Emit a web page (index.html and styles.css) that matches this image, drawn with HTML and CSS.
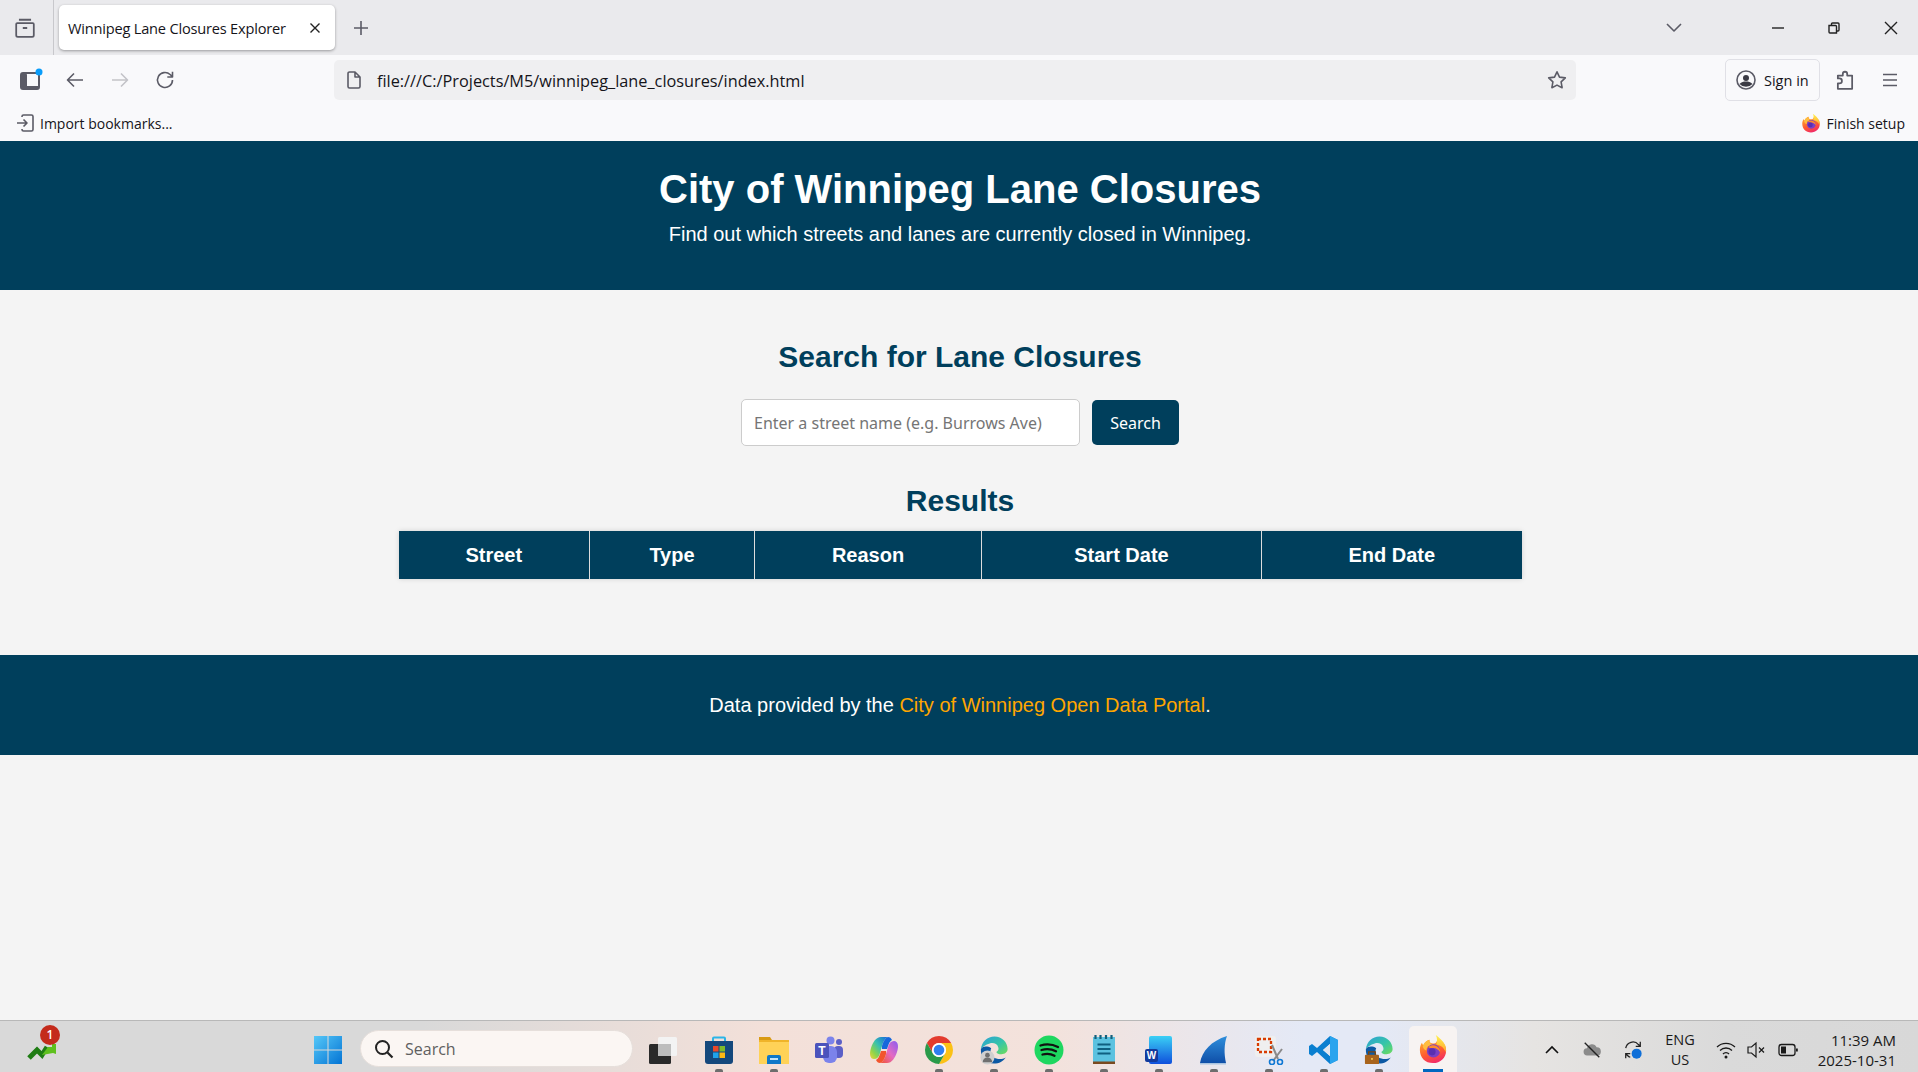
FILE: index.html
```html
<!DOCTYPE html>
<html lang="en">
<head>
<meta charset="utf-8">
<title>Winnipeg Lane Closures Explorer</title>
<link rel="stylesheet" href="styles.css">
</head>
<body>
<svg class="defs" width="0" height="0" aria-hidden="true">
  <defs>
    <linearGradient id="fxBody" x1="0.2" y1="0" x2="0.6" y2="1"><stop offset="0" stop-color="#ffb02e"/><stop offset=".6" stop-color="#ff5a30"/><stop offset="1" stop-color="#f02a6a"/></linearGradient>
    <linearGradient id="fxFlame" x1="0" y1="0" x2="0" y2="1"><stop offset="0" stop-color="#fff44f"/><stop offset="1" stop-color="#ffa52e"/></linearGradient>
    <linearGradient id="edgeG" x1="0" y1="0" x2="1" y2="1"><stop offset="0" stop-color="#2d9fd8"/><stop offset=".55" stop-color="#36c5a8"/><stop offset="1" stop-color="#6fdc5a"/></linearGradient>
    <linearGradient id="startG" x1="0" y1="0" x2="1" y2="1"><stop offset="0" stop-color="#55c8f8"/><stop offset="1" stop-color="#0474d4"/></linearGradient>
    <linearGradient id="copL" x1="1" y1="0" x2="0" y2="1"><stop offset="0" stop-color="#1668dc"/><stop offset=".45" stop-color="#38c0b0"/><stop offset=".75" stop-color="#8fd44a"/><stop offset="1" stop-color="#f2d43a"/></linearGradient>
    <linearGradient id="copR" x1="1" y1="0" x2="0" y2="1"><stop offset="0" stop-color="#8a5cf0"/><stop offset=".5" stop-color="#e46ac4"/><stop offset="1" stop-color="#f2552e"/></linearGradient>
    <linearGradient id="wordG" x1="0" y1="0" x2="0" y2="1"><stop offset="0" stop-color="#3bd0f5"/><stop offset="1" stop-color="#0f4fdc"/></linearGradient>
    <linearGradient id="sharkG" x1="0" y1="0" x2="0" y2="1"><stop offset="0" stop-color="#2f8fdc"/><stop offset="1" stop-color="#0f4fa8"/></linearGradient>
    <symbol id="firefox" viewBox="0 0 32 32">
      <path d="M16 31C7.700 31 2 25 2 17c0-3 .8-5.600 2.200-7.600.3 1.200.8 2 1.600 2.600C7 8.500 9.700 6.300 12.500 6 11.800 8 12.600 9.300 14.500 9.800 19 11 20 9 21 5c5.500 2.800 9 7.400 9 12.500C30 25.400 24 31 16 31z" fill="url(#fxBody)"/>
      <path d="M19 1c4 3 8 6.500 10 11 1 2.300 1 5 .6 7.500C27.500 14 23 11.500 19.500 11.500 20.500 8 20.800 4.500 19 1z" fill="url(#fxFlame)"/>
      <path d="M5 13c1-3 3.500-5.500 7-6.500-.4 2.500 1 4 3.500 4.600-3.500.6-6.500 2.400-6.500 6.400C7 17 5.500 15.500 5 13z" fill="#ffbd3f"/>
      <circle cx="16.500" cy="18" r="7" fill="#7a3fc4"/>
      <path d="M11 14c2.500-2 6-2.500 9-1 2.500 1.300 4 4 3.600 6.500-1.500-2.800-4.500-4.500-7-4.500-2 0-4 .1-5.600-1z" fill="#ff8a2e"/>
      <circle cx="15" cy="19" r="3.800" fill="#5a2fb0"/>
    </symbol>
    <symbol id="edge" viewBox="0 0 32 32">
      <path d="M2 15C3 7 9 1.500 16.500 1.500 24.500 1.500 30.500 7.500 30.500 15c0 3.500-3 5.500-6.500 5.500-3 0-5-1-5.500-2.500 2-1 2.800-2.700 2-5C19.500 9 15 8 11.500 9 7 10.300 3.500 12.500 2 15z" fill="url(#edgeG)"/>
      <path d="M2 15c-.5 9 5.500 15.500 14 15.500 5.500 0 10-2.500 12.500-6.500-3 1.800-7 2.200-10 1C13 23.500 11 18.500 13 14 8.500 11.500 4 12 2 15z" fill="#0c59a4"/>
    </symbol>
  </defs>
</svg>

<div class="browser">
  <div class="tabstrip">
    <div class="strip-btn sep">
      <svg class="i22" viewBox="0 0 20 20"><path class="s" d="M4.500 2.500h11M3 5.500h14a1 1 0 0 1 1 1v10a1.500 1.500 0 0 1-1.500 1.500h-13A1.500 1.500 0 0 1 2 16.500v-10a1 1 0 0 1 1-1zM8 10h4"/></svg>
    </div>
    <div class="tab">
      <span class="tab-title">Winnipeg Lane Closures Explorer</span>
      <svg class="i12" viewBox="0 0 12 12"><path class="s-dark" d="M1.500 1.500l9 9M10.500 1.500l-9 9"/></svg>
    </div>
    <div class="newtab"><svg class="i16" viewBox="0 0 16 16"><path class="s" d="M8 1v14M1 8h14"/></svg></div>
    <div class="strip-right">
      <svg class="i16 chev" viewBox="0 0 16 16"><path class="s" d="M1 4l7 7 7-7"/></svg>
      <div class="wctl"><svg class="i12" viewBox="0 0 12 12"><path class="s-dark" d="M0 6h12"/></svg></div>
      <div class="wctl"><svg class="i12" viewBox="0 0 12 12"><path class="s-dark" d="M1 3.500h6.500a1 1 0 0 1 1 1V11h-6.500a1 1 0 0 1-1-1zM3.500 3.500V2a1 1 0 0 1 1-1h5.500a1 1 0 0 1 1 1v6a1 1 0 0 1-1 1H8.500"/></svg></div>
      <div class="wctl"><svg class="i14" viewBox="0 0 14 14"><path class="s-dark" d="M1 1l12 12M13 1L1 13"/></svg></div>
    </div>
  </div>

  <div class="toolbar">
    <div class="tb-btn first">
      <svg class="i26" viewBox="0 0 26 26"><rect x="3" y="6" width="18" height="16" rx="2" fill="#f9f9fb" stroke="#5b5b66" stroke-width="2"/><rect x="3" y="6" width="6" height="16" rx="2" fill="#5b5b66"/><rect x="3" y="19" width="18" height="3" fill="#5b5b66"/><circle cx="21" cy="5" r="3.500" fill="#0a9dfa"/></svg>
    </div>
    <div class="tb-btn"><svg class="i20" viewBox="0 0 20 20"><path class="s" d="M18 10H2.500M9 3.500L2.500 10 9 16.500"/></svg></div>
    <div class="tb-btn"><svg class="i20" viewBox="0 0 20 20"><path class="s off" d="M2 10h15.500M11 3.500l6.500 6.500-6.500 6.500"/></svg></div>
    <div class="tb-btn"><svg class="i20" viewBox="0 0 20 20"><path class="s" d="M17.500 10a7.500 7.500 0 1 1-2.400-5.500l2.400 2.200M17.500 1.800v5.200h-5.200"/></svg></div>
    <div class="urlbar">
      <svg class="i20 url-file" viewBox="0 0 20 20"><path class="s" d="M4 3.500A1.500 1.500 0 0 1 5.500 2H11l5 5v9.500a1.500 1.500 0 0 1-1.500 1.500h-9A1.500 1.500 0 0 1 4 16.500zM11 2v5h5"/></svg>
      <span class="url-text">file:///C:/Projects/M5/winnipeg_lane_closures/index.html</span>
      <svg class="i20 url-star" viewBox="0 0 20 20"><path class="s" d="M10 1.800l2.500 5.300 5.800.8-4.200 4 1 5.800L10 15.100l-5.100 2.600 1-5.800-4.200-4 5.800-.8z"/></svg>
    </div>
    <div class="signin">
      <svg class="i20" viewBox="0 0 20 20"><circle class="s" cx="10" cy="10" r="9"/><circle cx="10" cy="8" r="3" fill="#3a3a44"/><path d="M3.500 14c2-2 4-2.500 6.500-2.500s4.500.5 6.500 2.500a9 9 0 0 1-13 0z" fill="#3a3a44"/></svg>
      <span>Sign in</span>
    </div>
    <div class="tb-btn puzzle"><svg class="i22" viewBox="0 0 20 20"><path class="s" d="M10 2.500a2 2 0 0 1 2 2V6h4.500v12H3.500v-5H5a2.200 2.200 0 0 0 0-4.400H3.500V6H8V4.500a2 2 0 0 1 2-2z"/></svg></div>
    <div class="tb-btn menu"><svg class="i16" viewBox="0 0 16 16"><path class="s" d="M1 2.500h14M1 8h14M1 13.500h14"/></svg></div>
  </div>

  <div class="bookmarks">
    <svg class="i18" viewBox="0 0 18 18"><path class="s" d="M1 9h10M7.500 5.500L11 9l-3.500 3.500M6 3V2.500A1.500 1.500 0 0 1 7.500 1h8A1.500 1.500 0 0 1 17 2.500v13a1.500 1.500 0 0 1-1.500 1.500h-8A1.500 1.500 0 0 1 6 15.500V15"/></svg>
    <span>Import bookmarks...</span>
    <span class="bm-right">
      <svg class="i20" viewBox="0 0 32 32"><use href="#firefox"/></svg>
      <span>Finish setup</span>
    </span>
  </div>
</div>

<div class="page">
  <header class="site-header">
    <h1>City of Winnipeg Lane Closures</h1>
    <p>Find out which streets and lanes are currently closed in Winnipeg.</p>
  </header>
  <main class="site-main">
    <h2>Search for Lane Closures</h2>
    <div class="search-row">
      <input class="search-input" type="text" placeholder="Enter a street name (e.g. Burrows Ave)">
      <button class="search-btn" type="button">Search</button>
    </div>
    <h2 class="results-title">Results</h2>
    <table class="results">
      <colgroup><col class="c1"><col class="c2"><col class="c3"><col class="c4"><col class="c5"></colgroup>
      <thead><tr><th>Street</th><th>Type</th><th>Reason</th><th>Start Date</th><th>End Date</th></tr></thead>
    </table>
  </main>
  <footer class="site-footer">
    <p>Data provided by the <a href="#">City of Winnipeg Open Data Portal</a>.</p>
  </footer>
</div>

<div class="taskbar">
  <div class="widget">
    <svg class="i34" viewBox="0 0 34 30"><path d="M3 24l8-8 5 5 5-8" fill="none" stroke="#1f7d14" stroke-width="5"/><path d="M16 21l6-8 4 0 0-3 4 0 0 10-3-1z" fill="#5fc01e"/></svg>
    <span class="badge">1</span>
  </div>
  <div class="tk start">
    <svg class="i30" viewBox="0 0 30 30"><path fill="url(#startG)" d="M1 1h13.500v13.500H1zM15.500 1H29v13.500H15.500zM1 15.500h13.500V29H1zM15.500 15.500H29V29H15.500z"/></svg>
  </div>
  <div class="tk-search">
    <svg class="i20" viewBox="0 0 20 20"><circle cx="8.500" cy="8.500" r="6.500" fill="none" stroke="#222" stroke-width="2"/><path d="M13.500 13.500l5 5" stroke="#222" stroke-width="2.200"/></svg>
    <span>Search</span>
  </div>
  <div class="tk lead">
    <svg class="i30" viewBox="0 0 30 30"><rect x="10" y="2" width="19" height="19" rx="1.500" fill="#f3f3f3"/><rect x="1" y="9" width="22" height="20" rx="1.500" fill="#2a2a2a"/><rect x="10" y="9" width="13" height="12" fill="#bdbdbd"/></svg>
  </div>
  <div class="tk dot shift">
    <svg class="i30" viewBox="0 0 30 30"><path d="M9 6V3.500a1 1 0 0 1 1-1h10a1 1 0 0 1 1 1V6" fill="none" stroke="#2bb5e8" stroke-width="2"/><path d="M1 6h28v20a3 3 0 0 1-3 3H4a3 3 0 0 1-3-3z" fill="#14487c"/><rect x="9" y="11" width="5.500" height="5.500" fill="#e8492a"/><rect x="15.500" y="11" width="5.500" height="5.500" fill="#7fba2a"/><rect x="9" y="17.500" width="5.500" height="5.500" fill="#1fa2ea"/><rect x="15.500" y="17.500" width="5.500" height="5.500" fill="#fdb813"/></svg>
  </div>
  <div class="tk dot">
    <svg class="i30" viewBox="0 0 30 30"><path d="M0 2h11l2 3h-13z" fill="#d99a13"/><rect y="5" width="30" height="24" fill="#ffd257"/><rect y="5" width="30" height="2" fill="#f0b429"/><path d="M8 29v-7a2 2 0 0 1 2-2h10a2 2 0 0 1 2 2v7z" fill="#0f78c8"/><rect x="11" y="23" width="8" height="2" fill="#bfe3fb"/></svg>
  </div>
  <div class="tk">
    <svg class="i30" viewBox="0 0 30 30"><circle cx="25" cy="7" r="3" fill="#5b5fc7"/><circle cx="16.500" cy="5.500" r="4" fill="#7b83eb"/><rect x="20" y="11" width="9" height="12" rx="4" fill="#5b5fc7"/><rect x="9" y="11" width="14" height="17" rx="6" fill="#7b83eb"/><rect x="1" y="8" width="14" height="15" rx="1.500" fill="#4b53bc"/><text class="svg-t" x="8" y="20" text-anchor="middle">T</text></svg>
  </div>
  <div class="tk">
    <svg class="i30" viewBox="0 0 30 30"><path d="M19 2h-7C7 2 4 7 2 13c-2 6-1 11 3 11 3 0 5-2 6-6l2-7c1-4 3-8 6-9z" fill="url(#copL)"/><path d="M11 28h7c5 0 8-5 10-11 2-6 1-11-3-11-3 0-5 2-6 6l-2 7c-1 4-3 8-6 9z" fill="url(#copR)"/><path d="M13 11c1-4 3-8 6-9 2 0 3 1 4 3-2 1-3 3-4 6l-1 3-5 0z" fill="#1668dc"/><path d="M17 19c-1 4-3 8-6 9-2 0-3-1-4-3 2-1 3-3 4-6l1-3 5 0z" fill="#f2552e"/></svg>
  </div>
  <div class="tk dot">
    <svg class="i30" viewBox="0 0 30 30"><path d="M15 1a14 14 0 0 1 12.120 7H15a7 7 0 0 0-6.060 10.500L2.880 8A14 14 0 0 1 15 1z" fill="#e33b2e"/><path d="M27.120 8A14 14 0 0 1 15 29l6.060-10.500A7 7 0 0 0 15 8z" fill="#fbc116"/><path d="M2.880 8l6.060 10.500a7 7 0 0 0 12.120 0L15 29A14 14 0 0 1 2.880 8z" fill="#2a9a49"/><circle cx="15" cy="15" r="7" fill="#fff"/><circle cx="15" cy="15" r="5.300" fill="#2f7ff0"/></svg>
  </div>
  <div class="tk dot">
    <svg class="i30" viewBox="0 0 32 32"><use href="#edge"/><circle cx="9" cy="24" r="7.500" fill="#cfcfcf"/><circle cx="9" cy="21.500" r="2.500" fill="#6f6f6f"/><path d="M4 29a5 5 0 0 1 10 0z" fill="#6f6f6f"/></svg>
  </div>
  <div class="tk dot">
    <svg class="i30" viewBox="0 0 30 30"><circle cx="15" cy="15" r="14.500" fill="#1ed760"/><path d="M6.500 10.500c6-1.800 12-1.300 17.500 1.500M7.500 15c5-1.400 10-1 14.500 1.300M8.500 19.500c4-1 8.500-.7 12 1.200" fill="none" stroke="#111" stroke-width="2.300" stroke-linecap="round"/></svg>
  </div>
  <div class="tk dot">
    <svg class="i30" viewBox="0 0 30 30"><rect x="4" y="2" width="22" height="25" fill="#5cc2e0"/><rect x="4" y="26.500" width="22" height="2.500" fill="#7a4a20"/><path d="M6.500 0v4M11.500 0v4M17 0v4M22.500 0v4" stroke="#14607c" stroke-width="2.200"/><path d="M8.500 9.500h13M8.500 14h13M8.500 18.500h13" stroke="#0f5f80" stroke-width="2"/></svg>
  </div>
  <div class="tk dot">
    <svg class="i30" viewBox="0 0 30 30"><rect x="5" y="1" width="23" height="28" rx="2" fill="url(#wordG)"/><rect x="1" y="14" width="13" height="13" rx="2" fill="#123a9c"/><text class="svg-t sm" x="7.500" y="24" text-anchor="middle">W</text></svg>
  </div>
  <div class="tk dot">
    <svg class="i30" viewBox="0 0 30 30"><path d="M1 28C3 16 12 6 28 1c-3 8-3 18-1 27z" fill="url(#sharkG)"/><path d="M1 28h26v1.500H1z" fill="#a9c4e0"/></svg>
  </div>
  <div class="tk dot">
    <svg class="i30" viewBox="0 0 30 30"><rect x="1" y="1" width="21" height="21" rx="3" fill="#efefef"/><rect x="4" y="4" width="13" height="13" fill="none" stroke="#d83b01" stroke-width="2.300" stroke-dasharray="3 2"/><path d="M18 10l6 14M28 14L19 26" stroke="#8a8a8a" stroke-width="2"/><circle cx="18" cy="27" r="2.500" fill="none" stroke="#0f78d4" stroke-width="1.600"/><circle cx="26" cy="27" r="2.500" fill="none" stroke="#0f78d4" stroke-width="1.600"/></svg>
  </div>
  <div class="tk dot">
    <svg class="i30" viewBox="0 0 30 30"><path d="M21 1l8 4v20l-8 4L8 17l-5 4-3-2v-8l3-2 5 4zM21 9l-7 6 7 6z" fill="#0a7fd0" fill-rule="evenodd"/><path d="M21 1l8 4v20l-8 4z" fill="#2aa4ee"/><path d="M21 9l-7 6 7 6z" fill="#dfe6ef"/></svg>
  </div>
  <div class="tk dot">
    <svg class="i30" viewBox="0 0 32 32"><use href="#edge"/><rect x="1" y="21" width="15" height="10" rx="1" fill="#a8641c"/><path d="M5 21v-3h7v3" fill="none" stroke="#7a4510" stroke-width="1.500"/><rect x="7.500" y="24.500" width="2" height="2" fill="#f2c14e"/></svg>
  </div>
  <div class="tk active">
    <svg class="i30" viewBox="0 0 32 32"><use href="#firefox"/></svg>
  </div>
  <div class="tray">
    <svg class="i14" viewBox="0 0 14 14"><path d="M1 10l6-6 6 6" fill="none" stroke="#111" stroke-width="1.600"/></svg>
    <svg class="i20" viewBox="0 0 22 20"><path d="M6 16a4 4 0 0 1-.5-8A5.500 5.500 0 0 1 16 7a4.500 4.500 0 0 1 .5 9z" fill="#8b8b8b"/><path d="M3 2l16 16" stroke="#222" stroke-width="1.500"/></svg>
    <svg class="i20" viewBox="0 0 22 22"><path d="M3 9a8 8 0 0 1 14-4l2 2M19 2v5h-5M3 20v-5h5M3 15l2 2a8 8 0 0 0 3 2" fill="none" stroke="#222" stroke-width="1.400"/><circle cx="15" cy="15" r="5.500" fill="#0f6fd8"/></svg>
    <div class="lang"><span>ENG</span><span>US</span></div>
    <div class="tray-sys">
      <svg class="i20" viewBox="0 0 20 20"><path d="M1 7a13 13 0 0 1 18 0M4 10.500a8.500 8.500 0 0 1 12 0M7 14a4 4 0 0 1 6 0" fill="none" stroke="#1a1a1a" stroke-width="1.300"/><circle cx="10" cy="17" r="1.500" fill="#1a1a1a"/></svg>
      <svg class="i20" viewBox="0 0 20 20"><path d="M1 7h3.500L9 3v14l-4.500-4H1zM12 7.500l5 5M17 7.500l-5 5" fill="none" stroke="#1a1a1a" stroke-width="1.200"/></svg>
      <svg class="i20" viewBox="0 0 20 20"><rect x="1" y="4.500" width="16" height="11" rx="2.500" fill="none" stroke="#1a1a1a" stroke-width="1.300"/><rect x="3" y="6.500" width="5" height="7" fill="#1a1a1a"/><rect x="18" y="8.500" width="1.800" height="3" fill="#1a1a1a"/></svg>
    </div>
    <div class="clock"><span>11:39 AM</span><span>2025-10-31</span></div>
  </div>
</div>
</body>
</html>
```

FILE: styles.css
```css
* { box-sizing: border-box; }
html, body { margin: 0; padding: 0; }
body {
  width: 1918px;
  height: 1072px;
  overflow: hidden;
  display: flex;
  flex-direction: column;
  background: #f4f4f4;
  font-family: "Liberation Sans", Arial, sans-serif;
}
.defs { position: absolute; }
svg { display: block; flex: none; }
.i12 { width: 12px; height: 12px; }
.i14 { width: 14px; height: 14px; }
.i16 { width: 16px; height: 16px; }
.i18 { width: 18px; height: 18px; }
.i20 { width: 20px; height: 20px; }
.i22 { width: 22px; height: 22px; }
.i26 { width: 26px; height: 26px; }
.i30 { width: 30px; height: 30px; }
.i34 { width: 34px; height: 30px; }
.s { fill: none; stroke: #5b5b66; stroke-width: 1.600; stroke-linejoin: round; }
.s.off { stroke: #c3c3c8; }
.s-dark { fill: none; stroke: #222; stroke-width: 1.400; }

/* Browser chrome */
.browser { flex: none; font-family: "Open Sans", sans-serif; color: #15141a; }
.tabstrip { height: 55px; background: #eaeaed; display: flex; align-items: stretch; }
.strip-btn { width: 54px; display: flex; align-items: center; justify-content: center; }
.strip-btn.sep { border-right: 1px solid #c8c8cc; padding-right: 4px; }
.tab {
  width: 276px;
  height: 45px;
  margin: 5px 0 0 5px;
  padding: 1px 14px 0 9px;
  background: #fff;
  border-radius: 5px;
  box-shadow: 0 1px 3px rgba(0, 0, 0, .35);
  display: flex;
  align-items: center;
  justify-content: space-between;
}
.tab-title { font-size: 14.600px; white-space: nowrap; letter-spacing: -.2px; }
.newtab { width: 52px; display: flex; align-items: center; justify-content: center; }
.strip-right { margin-left: auto; display: flex; align-items: center; }
.chev { margin-right: 68px; }
.wctl { width: 56px; display: flex; align-items: center; justify-content: center; }
.wctl:last-child { padding-left: 2px; }

.toolbar { height: 50px; background: #f9f9fb; display: flex; align-items: center; padding-left: 8px; }
.tb-btn { width: 45px; height: 40px; display: flex; align-items: center; justify-content: center; }
.tb-btn.first + .tb-btn { margin-left: -1px; }
.urlbar {
  width: 1242px;
  height: 40px;
  margin-left: 147px;
  background: #efeff1;
  border-radius: 5px;
  display: flex;
  align-items: center;
  padding: 0 9px 0 10px;
}
.url-text { font-size: 16.300px; margin-left: 13px; padding-top: 2px; white-space: nowrap; }
.url-star { margin-left: auto; }
.signin {
  width: 95px;
  height: 42px;
  margin-left: 149px;
  border: 1px solid #e0e0e6;
  border-radius: 5px;
  display: flex;
  align-items: center;
  gap: 8px;
  padding-left: 10px;
  font-size: 14.500px;
  white-space: nowrap;
}
.puzzle { margin-left: 2px; }

.bookmarks {
  height: 36px;
  background: #f9f9fb;
  display: flex;
  align-items: center;
  padding: 0 13px 0 16px;
  gap: 6px;
  font-size: 14px;
  white-space: nowrap;
}
.bm-right { margin-left: auto; display: flex; align-items: center; gap: 6px; }

/* Page: the document is centred on a 1920px viewport, as in the reference */
.page { flex: 1; min-height: 0; width: 1920px; }
.site-header { height: 149px; background: #003f5c; color: #fff; text-align: center; padding-top: 25px; }
.site-header h1 { margin: 0; font-size: 40px; line-height: 46px; font-weight: 700; }
.site-header p { margin: 11px 0 0; font-size: 20px; line-height: 23px; }
.site-main { height: 365px; padding-top: 49px; display: flex; flex-direction: column; align-items: center; }
.site-main h2 { margin: 0; color: #003f5c; font-size: 30px; line-height: 35px; font-weight: 700; }
.search-row { display: flex; align-items: center; gap: 12px; margin-top: 25px; }
.search-input {
  width: 339px;
  height: 47px;
  padding: 0 12px;
  background: #fff;
  border: 1px solid #ccc;
  border-radius: 5px;
  font-family: "Noto Sans", sans-serif;
  font-size: 16px;
  outline: none;
}
.search-input::placeholder { color: #757575; opacity: 1; }
.search-btn {
  width: 87px;
  height: 45px;
  padding: 0;
  background: #003f5c;
  color: #fff;
  border: 0;
  border-radius: 5px;
  font-family: "Noto Sans", sans-serif;
  font-size: 16px;
}
.site-main h2.results-title { margin-top: 37px; }
.results {
  width: 1123px;
  margin-top: 13px;
  table-layout: fixed;
  border-collapse: collapse;
  box-shadow: 0 0 5px rgba(0, 0, 0, .15);
}
.c1 { width: 191px; }
.c2 { width: 165px; }
.c3 { width: 227px; }
.c4 { width: 280px; }
.c5 { width: 260px; }
.results th {
  height: 48px;
  padding: 0;
  background: #003f5c;
  color: #fff;
  font-size: 20px;
  font-weight: 700;
  border: 1px solid #ddd;
  border-top: 0;
  border-bottom: 0;
}
.results th:first-child { border-left: 0; }
.results th:last-child { border-right: 0; }
.site-footer {
  height: 100px;
  background: #003f5c;
  color: #fff;
  font-size: 20px;
  display: flex;
  align-items: center;
  justify-content: center;
}
.site-footer p { margin: 0; }
.site-footer a { color: #ffa600; text-decoration: none; }

/* Taskbar */
.taskbar {
  flex: none;
  height: 52px;
  border-top: 1px solid #b8b8b8;
  background: linear-gradient(90deg, #d9d9d9 0, #d9d9d9 22%, #f3e0d9 40%, #f3e2dc 55%, #e4e9f6 68%, #e4e9f6 72%, #e6e4e2 80%, #dadada 90%, #d8d8d8 100%);
  display: flex;
  align-items: center;
  font-family: "Open Sans", sans-serif;
  color: #1a1a1a;
}
.widget { position: relative; width: 300px; padding-left: 26px; padding-top: 4px; }
.badge {
  position: absolute;
  left: 40px;
  top: -5px;
  width: 20px;
  height: 20px;
  border-radius: 50%;
  background: #c42b1c;
  color: #fff;
  font-size: 12px;
  font-weight: 600;
  line-height: 20px;
  text-align: center;
}
.tk { position: relative; width: 55px; height: 100%; display: flex; align-items: center; justify-content: center; padding-top: 6px; }
.tk.lead { margin-left: 2px; }
.tk.shift { margin-left: 1px; }
.tk.start { margin-right: 5px; }
.tk.dot::after {
  content: "";
  position: absolute;
  left: 24px;
  bottom: 0;
  width: 8px;
  height: 3px;
  border-radius: 2px 2px 0 0;
  background: #6d6d6d;
}
.tk.active { width: 48px; margin-left: 3px; height: 46px; padding-top: 0; align-self: flex-end; background: #f7f3f2; border-radius: 5px 5px 0 0; }
.tk.active::after {
  content: "";
  position: absolute;
  left: 14px;
  bottom: 0;
  width: 20px;
  height: 3px;
  background: #0067c0;
}
.tk-search {
  width: 273px;
  height: 37px;
  margin-top: 4px;
  padding-left: 13px;
  display: flex;
  align-items: center;
  gap: 11px;
  background: #fbf6f3;
  border: 1px solid #e6dfdb;
  border-radius: 19px;
  font-size: 16px;
  color: #5f5f5f;
}
.tray { flex: 1; display: flex; align-items: center; padding-left: 88px; padding-top: 6px; }
.tray > svg:nth-child(2) { margin-left: 23px; }
.tray > svg:nth-child(3) { margin-left: 21px; }
.lang { width: 52px; margin-left: 11px; display: flex; flex-direction: column; align-items: center; font-size: 14.500px; line-height: 20px; }
.tray-sys { display: flex; gap: 11px; margin-left: 10px; }
.clock { margin-left: auto; padding-right: 22px; display: flex; flex-direction: column; align-items: flex-end; font-size: 15px; line-height: 20px; white-space: nowrap; }
.svg-t { font-family: "Liberation Sans", sans-serif; font-weight: 700; font-size: 12px; fill: #fff; }
.svg-t.sm { font-size: 10px; }
```
